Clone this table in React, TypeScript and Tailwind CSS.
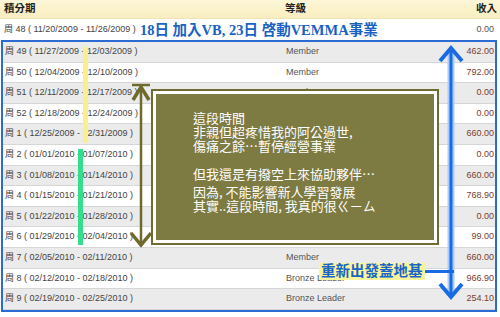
const rows = [
  { wk: "周 49", from: "11/27/2009", to: "12/03/2009", level: "Member", amt: "462.00" },
  { wk: "周 50", from: "12/04/2009", to: "12/10/2009", level: "Member", amt: "792.00" },
  { wk: "周 51", from: "12/11/2009", to: "12/17/2009", level: "Member", amt: "0.00" },
  { wk: "周 52", from: "12/18/2009", to: "12/24/2009", level: "", amt: "0.00" },
  { wk: "周 1", from: "12/25/2009", to: "12/31/2009", level: "", amt: "660.00" },
  { wk: "周 2", from: "01/01/2010", to: "01/07/2010", level: "", amt: "0.00" },
  { wk: "周 3", from: "01/08/2010", to: "01/14/2010", level: "", amt: "660.00" },
  { wk: "周 4", from: "01/15/2010", to: "01/21/2010", level: "", amt: "768.90" },
  { wk: "周 5", from: "01/22/2010", to: "01/28/2010", level: "", amt: "0.00" },
  { wk: "周 6", from: "01/29/2010", to: "02/04/2010", level: "Member", amt: "99.00" },
  { wk: "周 7", from: "02/05/2010", to: "02/11/2010", level: "Member", amt: "660.00" },
  { wk: "周 8", from: "02/12/2010", to: "02/18/2010", level: "Bronze Leader", amt: "966.90" },
  { wk: "周 9", from: "02/19/2010", to: "02/25/2010", level: "Bronze Leader", amt: "254.10" },
];

function Row({ wk, from, to, level, amt, shade }: { wk: string; from: string; to: string; level: string; amt: string; shade: boolean }) {
  return (
    <div className={`flex h-[20.6px] items-center border-b border-[#d6d6d6] text-[9px] ${shade ? "bg-[#ebebeb]" : "bg-white"}`}>
      <div className="w-[282px] pl-[2px] text-[#444]">
        {wk} ( {from} - {to} )
      </div>
      <div className="flex-1 pl-[1px] text-[#555]">{level}</div>
      <div className="pr-[1px] text-right text-[#7a3d2c]">{amt}</div>
    </div>
  );
}

export default function App() {
  return (
    <div
      className="relative h-[317px] w-[500px] overflow-hidden bg-white"
      style={{ fontFamily: '"Liberation Sans", "Noto Sans CJK TC", sans-serif' }}
    >
      {/* header */}
      <div className="flex h-[19px] items-center border-b border-[#efe3b8] bg-gradient-to-b from-[#fdf6d8] to-[#f9eebf] text-[10.5px] font-bold text-[#222]">
        <div className="w-[285px] pl-[4px]">積分期</div>
        <div className="flex-1">等級</div>
        <div className="pr-[3px] text-right">收入</div>
      </div>

      {/* week 48 */}
      <div className="flex h-[21px] items-center bg-white text-[9px]">
        <div className="w-[284px] pl-[4px] text-[#444]">周 48 ( 11/20/2009 - 11/26/2009 )</div>
        <div className="flex-1" />
        <div className="pr-[6px] text-right text-[#555]">0.00</div>
      </div>

      {/* framed weeks */}
      <div className="ml-[1px] w-[496px] border-2 border-[#2c6bd1]">
        {rows.map((r, i) => (
          <Row key={i} {...r} shade={i % 2 === 0} />
        ))}
      </div>

      {/* note over week 48 */}
      <div className="absolute left-[140px] top-[21px] text-[14.5px] font-bold leading-[18px] text-[#1862c4]" style={{ fontFamily: '"Liberation Serif", "Noto Sans CJK TC", serif' }}>
        18日 加入VB, 23日 啓動VEMMA事業
      </div>

      {/* highlighter marks */}
      <div className="absolute left-[83px] top-[47px] h-[96px] w-[5px] bg-[#f9f08c]" />
      <div className="absolute left-[78px] top-[149px] h-[96px] w-[5px] bg-[#34de8c]" />

      {/* olive arrow */}
      <svg className="absolute left-[128px] top-[80px]" width="26" height="170" viewBox="0 0 26 170">
        <line x1="4" y1="5" x2="22" y2="5" stroke="#6d6a2c" strokeWidth="2.5" />
        <line x1="13" y1="6" x2="13" y2="164" stroke="#6d6a2c" strokeWidth="2.5" />
        <polyline points="5,20 13,7 21,20" fill="none" stroke="#6d6a2c" strokeWidth="3.5" />
        <polyline points="3,153 13,165 23,153" fill="none" stroke="#6d6a2c" strokeWidth="3.5" />
      </svg>

      {/* olive note */}
      <div className="absolute left-[151px] top-[89px] h-[156px] w-[288px] border-2 border-[#6f6c31] bg-white p-[3px]">
        <div
          className="flex h-full flex-col bg-[#7d7a42] pl-[37px] pt-[17px] text-[13px] leading-[14px] text-white"
          style={{ fontFamily: '"Noto Sans CJK TC", serif' }}
        >
          <div>這段時間</div>
          <div>非親但超疼惜我的阿公過世,</div>
          <div>傷痛之餘…暫停經營事業</div>
          <div className="mt-[14px]">但我還是有撥空上來協助夥伴…</div>
          <div className="mt-[4px]">因為, 不能影響新人學習發展</div>
          <div>其實..這段時間, 我真的很ㄍㄧㄙ</div>
        </div>
      </div>

      {/* blue arrow */}
      <svg className="absolute left-[436px] top-[42px]" width="30" height="262" viewBox="0 0 30 262">
        <line x1="15" y1="8" x2="15" y2="253" stroke="#a9cdf6" strokeWidth="7" />
        <line x1="15" y1="7" x2="15" y2="254" stroke="#1a6ae4" strokeWidth="3" />
        <polyline points="4,19 15,6 26,19" fill="none" stroke="#1a6ae4" strokeWidth="4" />
        <polyline points="4,242 15,255 26,242" fill="none" stroke="#1a6ae4" strokeWidth="4" />
      </svg>

      {/* restart label */}
      <div className="absolute left-[319px] top-[263px] flex items-center">
        <span className="bg-[#faf49a] px-[2px] text-[14.5px] font-bold leading-[17px] text-[#1866c8]">重新出發蓋地基</span>
        <span className="h-[3px] w-[29px] bg-[#1a6ae4]" />
      </div>
    </div>
  );
}
